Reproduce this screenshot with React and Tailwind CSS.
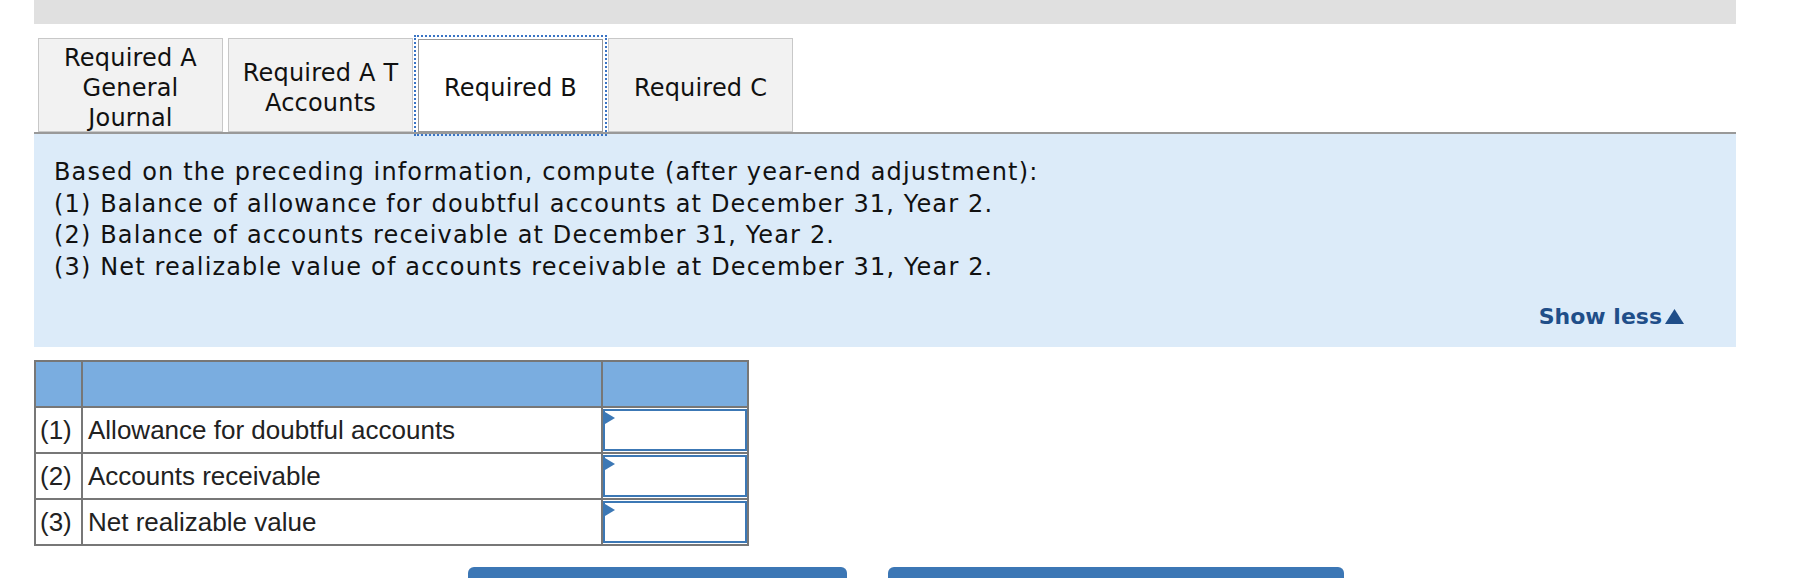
export default function App() {
  const verdana = { fontFamily: '"DejaVu Sans", Verdana, sans-serif' };
  const arial = { fontFamily: '"Liberation Sans", Arial, sans-serif' };
  const tabs = [
    { lines: ["Required A", "General", "Journal"], active: false },
    { lines: ["Required A T", "Accounts"], active: false },
    { lines: ["Required B"], active: true },
    { lines: ["Required C"], active: false },
  ];
  const rows = [
    ["(1)", "Allowance for doubtful accounts"],
    ["(2)", "Accounts receivable"],
    ["(3)", "Net realizable value"],
  ];
  return (
    <div className="w-[1800px] min-h-[620px] bg-white">
      <div className="ml-[34px] w-[1702px]">
        <div className="h-[24px] bg-[#e0e0e0]" />
        <div className="mt-[14px] flex gap-[5px] pl-[4px] border-b-2 border-[#999999]" style={verdana}>
          {tabs.map((t, i) => (
            <div
              key={i}
              className={
                t.active
                  ? "w-[185px] h-[93px] mt-[1px] pt-[5px] flex flex-col items-center justify-center text-center border border-[#999999] bg-white text-[24px] leading-[30px] tracking-[0.2px] text-[#111] outline-2 outline-dotted outline-offset-[2px] outline-[#3a74c4]"
                  : "w-[185px] h-[94px] pt-[5px] flex flex-col items-center justify-center text-center border border-[#c8c8c8] bg-[#f2f2f2] text-[24px] leading-[30px] tracking-[0.2px] text-[#111]"
              }
            >
              {t.lines.map((l, j) => (
                <span key={j}>{l}</span>
              ))}
            </div>
          ))}
        </div>
        <div className="h-[213px] bg-[#dcebf9] pt-[23px] pl-[20px] pr-[52px] text-[#111]" style={verdana}>
          <div className="text-[24px] leading-[31.5px] tracking-[1.15px]">
            <div>Based on the preceding information, compute (after year-end adjustment):</div>
            <div>(1) Balance of allowance for doubtful accounts at December 31, Year 2.</div>
            <div>(2) Balance of accounts receivable at December 31, Year 2.</div>
            <div>(3) Net realizable value of accounts receivable at December 31, Year 2.</div>
          </div>
          <div className="mt-[20px] flex justify-end">
            <span className="flex items-center gap-[3px] text-[22px] leading-[28px] font-bold text-[#1f4e89]">
              Show less
              <svg width="19" height="15" viewBox="0 0 19 15" className="mt-[-2px]">
                <polygon points="9.5,0 19,15 0,15" fill="#1f4e89" />
              </svg>
            </span>
          </div>
        </div>
        <table className="mt-[13px] border-collapse text-[#222]" style={arial}>
          <colgroup>
            <col className="w-[47px]" />
            <col className="w-[520px]" />
            <col className="w-[146px]" />
          </colgroup>
          <tbody>
            <tr className="h-[46px] bg-[#7aade0]">
              <td className="border-2 border-[#777777]" />
              <td className="border-2 border-[#777777]" />
              <td className="border-2 border-[#777777]" />
            </tr>
            {rows.map((r, i) => (
              <tr key={i} className="h-[46px]">
                <td className="border-2 border-[#777777] text-[26px] leading-[28px] pl-[4px] pr-0 text-left whitespace-nowrap">{r[0]}</td>
                <td className="border-2 border-[#777777] text-[26px] leading-[28px] pl-[5px] text-left whitespace-nowrap">{r[1]}</td>
                <td className="border-2 border-[#777777] p-0">
                  <div className="relative h-[42px] w-full border-2 border-[#3c78b5] bg-white">
                    <svg width="10" height="12" viewBox="0 0 10 12" className="absolute left-[0px] top-[1px]">
                      <polygon points="0,0 10,6 0,12" fill="#3c78b5" />
                    </svg>
                  </div>
                </td>
              </tr>
            ))}
          </tbody>
        </table>
        <div className="mt-[21px] ml-[434px] flex gap-[41px]">
          <div className="w-[379px] h-[40px] rounded-t-[6px] bg-[#3c77b5]" />
          <div className="w-[456px] h-[40px] rounded-t-[6px] bg-[#3c77b5]" />
        </div>
      </div>
    </div>
  );
}
